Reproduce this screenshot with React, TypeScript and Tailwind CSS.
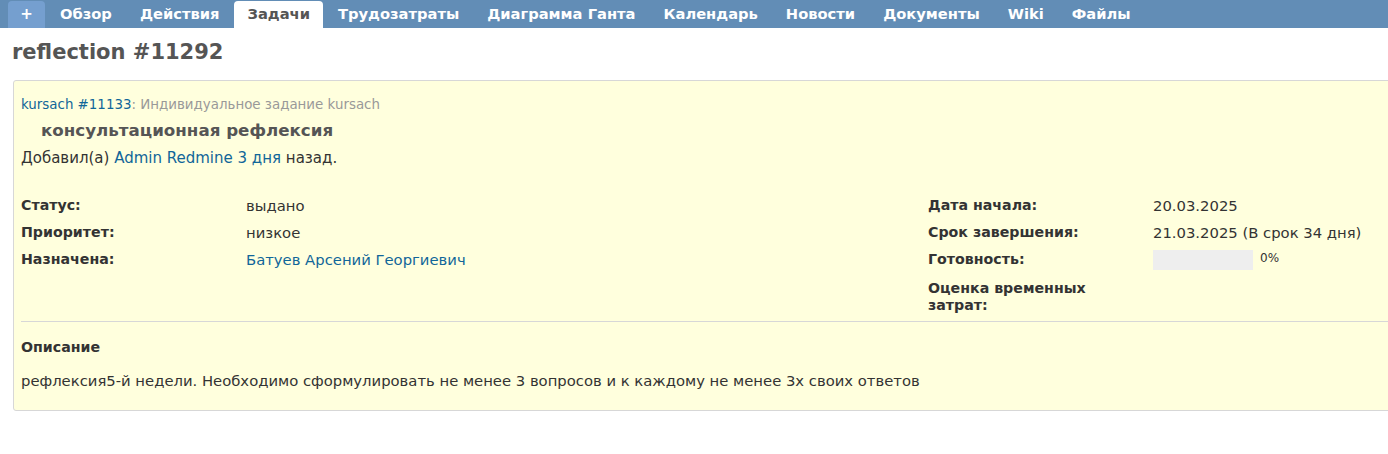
import React from "react";

const tabs = ["Обзор", "Действия", "Задачи", "Трудозатраты", "Диаграмма Ганта", "Календарь", "Новости", "Документы", "Wiki", "Файлы"];

function Row({ label, children }: { label: string; children?: React.ReactNode }) {
  return (
    <div className="flex py-[5px] leading-[17px]">
      <div className="w-[225px] shrink-0 pr-[50px] font-bold text-[14.2px] text-[#333]">{label}</div>
      <div className="flex-1">{children}</div>
    </div>
  );
}

export default function App() {
  return (
    <div className="w-[1388px] h-[454px] overflow-hidden bg-white text-[#333]" style={{ fontFamily: '"DejaVu Sans", Verdana, sans-serif' }}>
      <div className="h-[28px] bg-[#628db6] flex items-end pl-[8px] gap-[2px]">
        <div className="h-[27px] w-[37px] rounded-t-[4px] bg-[#759fcf] text-white font-bold text-[15px] flex items-center justify-center">+</div>
        {tabs.map((t) =>
          t === "Задачи" ? (
            <div key={t} className="h-[27px] px-[13px] rounded-t-[4px] bg-white text-[#555] font-bold text-[14.7px] flex items-center">{t}</div>
          ) : (
            <div key={t} className="h-[27px] px-[13px] text-white font-bold text-[14.7px] flex items-center">{t}</div>
          )
        )}
      </div>
      <h2 className="mt-[10px] ml-[12px] text-[21px] leading-[28px] font-bold text-[#555]">reflection #11292</h2>
      <div className="mt-[14px] ml-[13px] w-[1830px] h-[331px] bg-[#ffffdd] border border-[#d7d7d7] rounded-[3px] px-[7px] pt-[14px] text-[14.8px]">
        <div className="leading-[20px] text-[13.4px]">
          <span className="text-[#169]">kursach #11133</span>
          <span className="text-[#999]">: Индивидуальное задание kursach</span>
        </div>
        <div className="ml-[20px] mt-[4px] text-[16.7px] leading-[22px] font-bold text-[#555]">консультационная рефлексия</div>
        <div className="mt-[9px] leading-[17px] text-[15px]">
          Добавил(а) <span className="text-[#169]">Admin Redmine</span> <span className="text-[#169]">3 дня</span> назад.
        </div>
        <div className="mt-[25px] flex">
          <div className="w-[907px]">
            <Row label="Статус:">выдано</Row>
            <Row label="Приоритет:">низкое</Row>
            <Row label="Назначена:"><span className="text-[#169]">Батуев Арсений Георгиевич</span></Row>
          </div>
          <div className="w-[907px]">
            <Row label="Дата начала:">20.03.2025</Row>
            <Row label="Срок завершения:">21.03.2025 (В срок 34 дня)</Row>
            <Row label="Готовность:">
              <div className="flex items-start">
                <div className="w-[100px] h-[20px] bg-[#eeeeee] mt-[-1px]"></div>
                <span className="ml-[7px] text-[12px] leading-[14px]">0%</span>
              </div>
            </Row>
            <Row label="Оценка временных затрат:"></Row>
          </div>
        </div>
        <div className="mt-[2px] border-t border-[#d7d7d7]"></div>
        <div className="mt-[17px] font-bold text-[14.2px] leading-[17px]">Описание</div>
        <div className="mt-[16px] leading-[17px]">рефлексия5-й недели. Необходимо сформулировать не менее 3 вопросов и к каждому не менее 3х своих ответов</div>
      </div>
    </div>
  );
}
